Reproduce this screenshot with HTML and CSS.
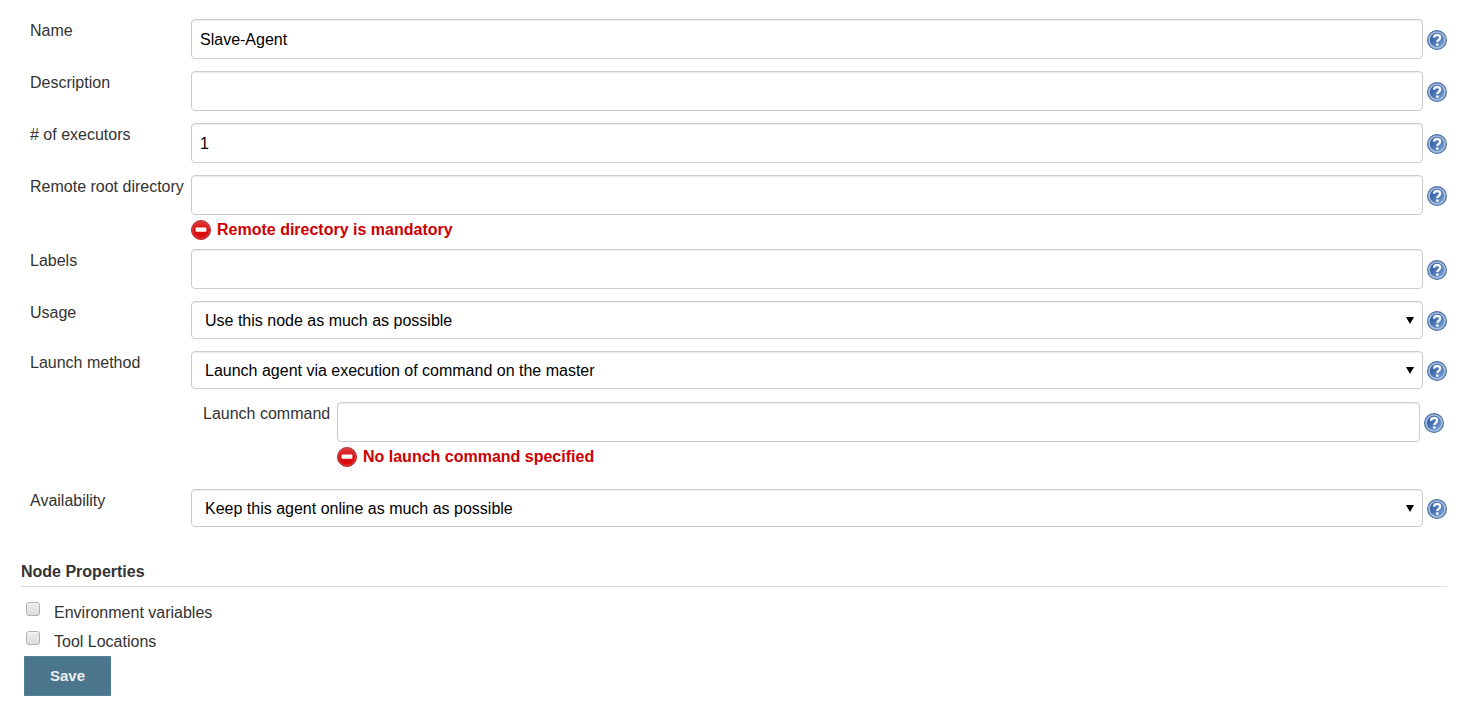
FILE: index.html
```
<!DOCTYPE html>
<html lang="en">
<head>
<meta charset="utf-8">
<title>Slave-Agent configuration</title>
<link rel="stylesheet" href="styles.css">
</head>
<body>
<svg class="sprites" aria-hidden="true">
  <defs>
    <linearGradient id="ring" x1="0" y1="0" x2="0" y2="1"><stop offset="0" stop-color="#a9bddb"/><stop offset="1" stop-color="#a9c2e2"/></linearGradient>
    <linearGradient id="blue" x1="0" y1="0" x2="1" y2="1"><stop offset="0" stop-color="#2a529b"/><stop offset="0.45" stop-color="#4a73b3"/><stop offset="1" stop-color="#7fa5d6"/></linearGradient>
    <linearGradient id="red" x1="0" y1="0" x2="0" y2="1"><stop offset="0" stop-color="#e03a3a"/><stop offset="0.5" stop-color="#d90f12"/><stop offset="1" stop-color="#dc0808"/></linearGradient>
    <symbol id="help" viewBox="0 0 20 20">
      <circle cx="10" cy="10" r="9.4" fill="url(#ring)" stroke="#4a6fa6" stroke-width="1.2"/>
      <circle cx="10" cy="10" r="7.2" fill="url(#blue)"/>
      <path d="M7 7.8C7 5.9 8.2 5 10.1 5c1.9 0 3 1 3 2.4 0 2.3-2.8 2.4-2.8 4.6" fill="none" stroke="#f4f7fc" stroke-width="2.3"/>
      <circle cx="10.3" cy="14.6" r="1.4" fill="#f4f7fc"/>
    </symbol>
    <symbol id="error" viewBox="0 0 20 20">
      <circle cx="10" cy="10" r="9.5" fill="url(#red)" stroke="#b5282a" stroke-width="1"/>
      <circle cx="10" cy="10" r="8.4" fill="none" stroke="#d94345" stroke-width="1"/>
      <rect x="4.6" y="7.6" width="10.8" height="4.2" rx="0.5" fill="#fff"/>
    </symbol>
  </defs>
</svg>
<form class="config">
  <div class="fields">
    <div class="row">
      <label class="label" for="name">Name</label>
      <input class="text" id="name" type="text" value="Slave-Agent">
      <button class="help" type="button" aria-label="Help"><svg class="icon"><use href="#help"/></svg></button>
    </div>
    <div class="row">
      <label class="label" for="description">Description</label>
      <input class="text" id="description" type="text">
      <button class="help" type="button" aria-label="Help"><svg class="icon"><use href="#help"/></svg></button>
    </div>
    <div class="row">
      <label class="label" for="executors"># of executors</label>
      <input class="text" id="executors" type="text" value="1">
      <button class="help" type="button" aria-label="Help"><svg class="icon"><use href="#help"/></svg></button>
    </div>
    <div class="row invalid">
      <label class="label" for="root">Remote root directory</label>
      <input class="text" id="root" type="text">
      <button class="help" type="button" aria-label="Help"><svg class="icon"><use href="#help"/></svg></button>
      <div class="error"><svg class="icon"><use href="#error"/></svg><span>Remote directory is mandatory</span></div>
    </div>
    <div class="row">
      <label class="label" for="labels">Labels</label>
      <input class="text" id="labels" type="text">
      <button class="help" type="button" aria-label="Help"><svg class="icon"><use href="#help"/></svg></button>
    </div>
    <div class="row">
      <label class="label" for="usage">Usage</label>
      <div class="choice"><select class="select" id="usage"><option>Use this node as much as possible</option></select><svg class="arrow" viewBox="0 0 8 7"><path d="M0 0h8L4 7z"/></svg></div>
      <button class="help" type="button" aria-label="Help"><svg class="icon"><use href="#help"/></svg></button>
    </div>
    <div class="row">
      <label class="label" for="launch">Launch method</label>
      <div class="choice"><select class="select" id="launch"><option>Launch agent via execution of command on the master</option></select><svg class="arrow" viewBox="0 0 8 7"><path d="M0 0h8L4 7z"/></svg></div>
      <button class="help" type="button" aria-label="Help"><svg class="icon"><use href="#help"/></svg></button>
    </div>
    <div class="row nested">
      <label class="label" for="command">Launch command</label>
      <input class="text" id="command" type="text">
      <button class="help" type="button" aria-label="Help"><svg class="icon"><use href="#help"/></svg></button>
      <div class="error"><svg class="icon"><use href="#error"/></svg><span>No launch command specified</span></div>
    </div>
    <div class="row">
      <label class="label" for="availability">Availability</label>
      <div class="choice"><select class="select" id="availability"><option>Keep this agent online as much as possible</option></select><svg class="arrow" viewBox="0 0 8 7"><path d="M0 0h8L4 7z"/></svg></div>
      <button class="help" type="button" aria-label="Help"><svg class="icon"><use href="#help"/></svg></button>
    </div>
  </div>
  <h2 class="heading">Node Properties</h2>
  <div class="properties">
    <div class="property"><input class="check" type="checkbox" id="env"><label for="env">Environment variables</label></div>
    <div class="property"><input class="check" type="checkbox" id="tools"><label for="tools">Tool Locations</label></div>
  </div>
  <button class="save" type="submit">Save</button>
</form>
</body>
</html>
```
FILE: styles.css
```
* {
  box-sizing: border-box;
}

body {
  margin: 0;
  background: #fff;
  color: #333;
  font: 16px/22px "Liberation Sans", Arial, sans-serif;
}

.sprites {
  position: absolute;
  width: 0;
  height: 0;
}

.config {
  padding: 19px 19px 15px 21px;
}

.fields {
  display: flex;
  flex-direction: column;
  gap: 12px;
  padding-left: 9px;
}

.row {
  display: grid;
  grid-template-columns: 161px 1fr 24px;
}

.label {
  line-height: 24px;
  white-space: nowrap;
}

.text,
.select {
  width: 100%;
  margin: 0;
  border: 1px solid #ccc;
  border-radius: 4px;
  background: #fff;
  color: #000;
  font: inherit;
  box-shadow: inset 0 1px 1px rgba(0, 0, 0, 0.075);
}

.text {
  height: 40px;
  padding: 10px 8px 8px;
}

.select {
  display: block;
  height: 38px;
  padding: 2px 24px 0 13px;
  appearance: none;
}

.choice {
  position: relative;
}

.arrow {
  position: absolute;
  top: 16px;
  right: 9px;
  width: 8px;
  height: 7px;
  pointer-events: none;
}

.help {
  display: flex;
  align-self: center;
  margin: 2px 0 0 4px;
  padding: 0;
  border: 0;
  background: none;
}

.icon {
  display: block;
  flex: none;
  width: 20px;
  height: 20px;
}

.error {
  display: flex;
  grid-column: 2 / -1;
  gap: 6px;
  margin-top: 5px;
  color: #c00;
  font-weight: bold;
  line-height: 20px;
}

.invalid {
  margin-bottom: -3px;
}

.nested {
  grid-template-columns: 134px 1fr 24px;
  margin: 1px 3px 10px 173px;
}

.heading {
  margin: 33px 0 15px;
  padding-bottom: 2px;
  border-bottom: 1px solid #ddd;
  font-size: 16px;
  line-height: 24px;
}

.properties {
  display: flex;
  flex-direction: column;
  gap: 7px;
  padding: 0 0 3px 5px;
}

.property {
  display: flex;
  gap: 14px;
}

.check {
  width: 14px;
  height: 14px;
  margin: 0;
  border: 1px solid #b0b0b0;
  border-radius: 3px;
  background: linear-gradient(#eee, #dcdcdc);
  box-shadow: inset 0 1px 1px #f8f8f8;
  appearance: none;
}

.check:checked {
  background: #4b758b;
}

.save {
  display: block;
  height: 40px;
  margin-left: 3px;
  padding: 0 25px;
  border: 1px solid #4d8299;
  background: #4b758b;
  color: #eee;
  font: bold 15px/22px "Liberation Sans", Arial, sans-serif;
}
```
